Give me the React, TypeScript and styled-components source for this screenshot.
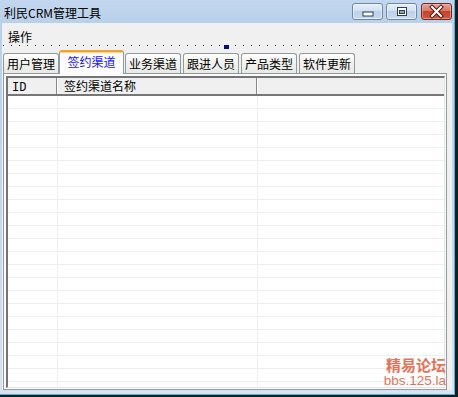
import React from "react";
import styled, { createGlobalStyle } from "styled-components";

const Global = createGlobalStyle`
  html, body { margin: 0; padding: 0; background: #1b1b1b; overflow: hidden; }
  #root { width: 458px; height: 397px; }
`;

const Screen = styled.div`
  position: relative;
  width: 458px;
  height: 397px;
  background: #1b1b1b;
  font-family: "Noto Sans CJK SC", "Noto Sans", sans-serif;
  font-size: 12px;
  color: #000;
`;

const Frame = styled.div`
  box-sizing: border-box;
  width: 455px;
  height: 395px;
  display: flex;
  flex-direction: column;
  padding: 0 2px 4px 2px;
  background: linear-gradient(#c2d7ef, #b9d0ea 23px, #c6d9ee 60%, #d6e3f2);
  border-right: 1px solid #3fb8df;
  border-bottom: 1px solid #3fb8df;
`;

const TitleBar = styled.div`
  height: 23px;
  display: flex;
  align-items: flex-start;
  justify-content: space-between;
`;

const Title = styled.div`
  padding: 6px 0 0 2px;
  line-height: 13px;
  font-size: 12px;
  color: #000;
`;

const Buttons = styled.div`
  display: flex;
  gap: 3px;
  padding-top: 3px;
`;

const CapButton = styled.div<{ $close?: boolean }>`
  box-sizing: border-box;
  width: 31px;
  height: 17px;
  margin-left: ${(p) => (p.$close ? "1px" : "0")};
  border: 1px solid ${(p) => (p.$close ? "#6e2a20" : "#6f87a6")};
  border-radius: 3px;
  background: ${(p) =>
    p.$close
      ? "linear-gradient(#e7a195, #d67a68 45%, #c4432c 50%, #cf5a40)"
      : "linear-gradient(#e6eff9, #d2e1f2 45%, #bdd1ea 50%, #c7d9ee)"};
  box-shadow: inset 0 0 0 1px ${(p) => (p.$close ? "rgba(255,200,190,0.5)" : "rgba(255,255,255,0.55)")};
  display: flex;
  align-items: center;
  justify-content: center;
`;

const Client = styled.div`
  flex: 1;
  display: flex;
  flex-direction: column;
  background: #f0f0f0;
`;

const MenuBar = styled.div`
  height: 20px;
  box-sizing: border-box;
  padding: 8px 0 0 6px;
  line-height: 12px;
  font-size: 12px;
`;

const ToolStrip = styled.div`
  height: 6px;
  margin: 0 2px 0 1px;
  display: flex;
  justify-content: center;
  background-image: repeating-linear-gradient(90deg, #1a1a1a 0 1px, transparent 1px 8px);
  background-size: 100% 1px;
  background-repeat: no-repeat;
  background-position: 0 2px;
`;

const Grip = styled.div`
  width: 5px;
  height: 4px;
  margin: 2px 0 0 -1px;
  background: #0a0a7a;
`;

const TabStrip = styled.div`
  height: 24px;
  display: flex;
  align-items: flex-end;
  gap: 2px;
  padding-left: 1px;
  position: relative;
  z-index: 1;
`;

const Tab = styled.div<{ $active?: boolean }>`
  box-sizing: border-box;
  width: ${(p) => (p.$active ? "65px" : "56px")};
  height: ${(p) => (p.$active ? "24px" : "20px")};
  margin: ${(p) => (p.$active ? "0 -1px -1px -2px" : "0")};
  border: 1px solid #919b9c;
  border-bottom: none;
  border-top: ${(p) => (p.$active ? "2px solid #f0a22f" : "1px solid #919b9c")};
  border-radius: 3px 3px 0 0;
  background: ${(p) => (p.$active ? "#fcfcfe" : "linear-gradient(#ffffff, #f3f3f1 40%, #e8e8e5)")};
  color: ${(p) => (p.$active ? "#1414ff" : "#000")};
  text-align: center;
  font-size: 12px;
  line-height: ${(p) => (p.$active ? "20px" : "19px")};
  box-shadow: ${(p) => (p.$active ? "inset 0 1px 0 #ffd27a" : "none")};
`;

const Panel = styled.div`
  box-sizing: border-box;
  height: 317px;
  margin: 0 5px 0 1px;
  padding: 2px 1px 1px 2px;
  border: 1px solid #919b9c;
  background: #fcfcfe;
  display: flex;
`;

const List = styled.div`
  flex: 1;
  box-sizing: border-box;
  overflow: hidden;
  background: #fff;
  border-left: 2px solid #747474;
  border-top: 2px solid #747474;
  border-right: 1px solid #e3e3e3;
  border-bottom: 1px solid #e3e3e3;
  display: flex;
  flex-direction: column;
`;

const Header = styled.div`
  display: flex;
  height: 18px;
  box-sizing: border-box;
  background: #f0f0f0;
  border-bottom: 2px solid #767676;
  flex-shrink: 0;
`;

const HeadCell = styled.div<{ $w?: number; $pad: number }>`
  box-sizing: border-box;
  ${(p) => (p.$w ? `width: ${p.$w}px;` : "flex: 1;")}
  padding-left: ${(p) => p.$pad}px;
  line-height: 16px;
  font-size: 12px;
  border-right: ${(p) => (p.$w ? "1px solid #ffffff" : "none")};
  box-shadow: ${(p) => (p.$w ? "inset -1px 0 0 #8a8a8a" : "none")};
`;

const IdText = styled.span`
  font-family: "Liberation Mono", "DejaVu Sans Mono", monospace;
  font-size: 12px;
`;

const Row = styled.div`
  display: flex;
  height: 13px;
  box-sizing: border-box;
  border-bottom: 1px solid #efefef;
  flex-shrink: 0;
`;

const Cell = styled.div<{ $w?: number }>`
  box-sizing: border-box;
  ${(p) => (p.$w ? `width: ${p.$w}px; border-right: 1px solid #efefef;` : "flex: 1;")}
`;

const Watermark = styled.div`
  position: absolute;
  right: 12px;
  top: 357px;
  text-align: right;
  color: #e2745a;
  text-shadow: 0 0 1px #fff;
`;

const WmTitle = styled.div`
  font-family: "Noto Sans CJK SC", sans-serif;
  font-weight: 700;
  font-size: 15px;
  line-height: 16px;
`;

const WmUrl = styled.div`
  font-family: "Liberation Sans", Arial, sans-serif;
  font-size: 13.5px;
  line-height: 13px;
  margin-top: 1px;
`;

const MinGlyph = () => (
  <svg width="29" height="15" viewBox="0 0 29 15">
    <rect x="10" y="8" width="10" height="4" fill="#fff" stroke="#2d3f57" strokeWidth="1" />
  </svg>
);

const MaxGlyph = () => (
  <svg width="29" height="15" viewBox="0 0 29 15">
    <rect x="10.5" y="3.5" width="9" height="8" fill="#fff" stroke="#2d3f57" strokeWidth="1" />
    <rect x="12.5" y="6.5" width="5" height="3" fill="#8ea6c4" stroke="#2d3f57" strokeWidth="1" />
  </svg>
);

const CloseGlyph = () => (
  <svg width="29" height="15" viewBox="0 0 29 15">
    <path d="M10 3 L19 12 M19 3 L10 12" stroke="#4a1810" strokeWidth="4" strokeLinecap="square" />
    <path d="M10 3 L19 12 M19 3 L10 12" stroke="#fff" strokeWidth="2" strokeLinecap="square" />
  </svg>
);

const tabs = ["用户管理", "签约渠道", "业务渠道", "跟进人员", "产品类型", "软件更新"];

export default function App() {
  const rows = Array.from({ length: 23 }, (_, i) => i);
  return (
    <Screen>
      <Global />
      <Frame>
        <TitleBar>
          <Title>利民CRM管理工具</Title>
          <Buttons>
            <CapButton><MinGlyph /></CapButton>
            <CapButton><MaxGlyph /></CapButton>
            <CapButton $close><CloseGlyph /></CapButton>
          </Buttons>
        </TitleBar>
        <Client>
          <MenuBar>操作</MenuBar>
          <ToolStrip>
            <Grip />
          </ToolStrip>
          <TabStrip>
            {tabs.map((t, i) => (
              <Tab key={t} $active={i === 1}>
                {t}
              </Tab>
            ))}
          </TabStrip>
          <Panel>
            <List>
              <Header>
                <HeadCell $w={50} $pad={4}>
                  <IdText>ID</IdText>
                </HeadCell>
                <HeadCell $w={200} $pad={6}>签约渠道名称</HeadCell>
                <HeadCell $pad={0} />
              </Header>
              {rows.map((r) => (
                <Row key={r}>
                  <Cell $w={50} />
                  <Cell $w={200} />
                  <Cell />
                </Row>
              ))}
            </List>
          </Panel>
        </Client>
      </Frame>
      <Watermark>
        <WmTitle>精易论坛</WmTitle>
        <WmUrl>bbs.125.la</WmUrl>
      </Watermark>
    </Screen>
  );
}
